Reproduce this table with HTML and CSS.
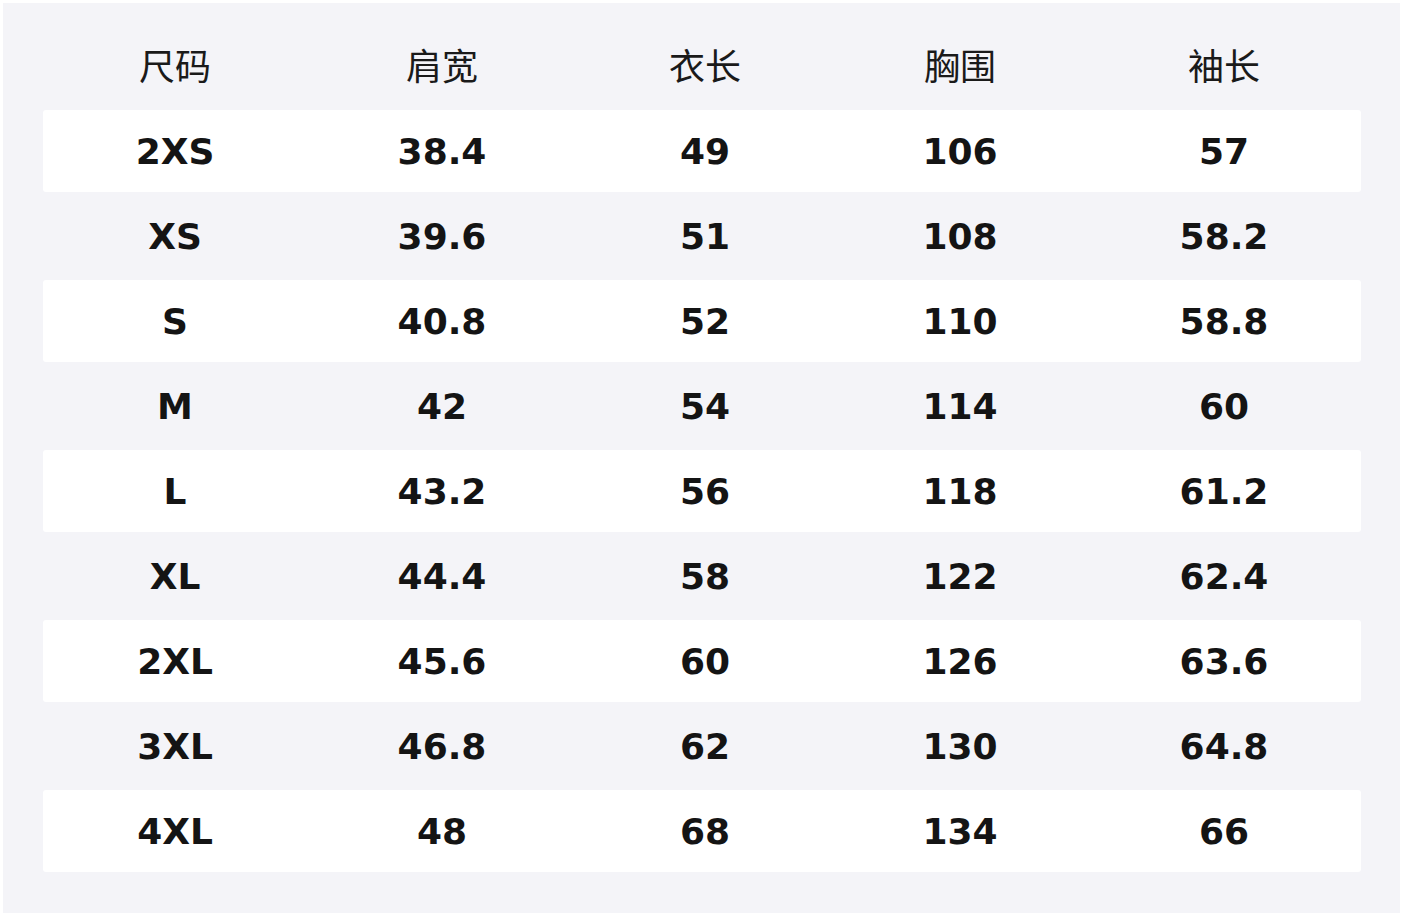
FILE: index.html
```html
<!DOCTYPE html>
<html lang="zh">
<head>
<meta charset="utf-8">
<title>尺码表</title>
<link rel="stylesheet" href="styles.css">
</head>
<body>
<div class="panel">
  <div class="table">
    <div class="row head"><div>尺码</div><div>肩宽</div><div>衣长</div><div>胸围</div><div>袖长</div></div>
    <div class="row odd"><div>2XS</div><div>38.4</div><div>49</div><div>106</div><div>57</div></div>
    <div class="row"><div>XS</div><div>39.6</div><div>51</div><div>108</div><div>58.2</div></div>
    <div class="row odd"><div>S</div><div>40.8</div><div>52</div><div>110</div><div>58.8</div></div>
    <div class="row"><div>M</div><div>42</div><div>54</div><div>114</div><div>60</div></div>
    <div class="row odd"><div>L</div><div>43.2</div><div>56</div><div>118</div><div>61.2</div></div>
    <div class="row"><div>XL</div><div>44.4</div><div>58</div><div>122</div><div>62.4</div></div>
    <div class="row odd"><div>2XL</div><div>45.6</div><div>60</div><div>126</div><div>63.6</div></div>
    <div class="row"><div>3XL</div><div>46.8</div><div>62</div><div>130</div><div>64.8</div></div>
    <div class="row odd"><div>4XL</div><div>48</div><div>68</div><div>134</div><div>66</div></div>
  </div>
</div>
</body>
</html>
```
FILE: styles.css
```css
html, body {
  margin: 0;
  padding: 0;
  background: #ffffff;
}
.panel {
  margin: 3px 0 0 3px;
  width: 1397px;
  height: 910px;
  box-sizing: border-box;
  padding: 22px 39px 0 40px;
  background: #f4f4f8;
}
.table {
  display: flex;
  flex-direction: column;
  gap: 3px;
}
.row {
  display: grid;
  grid-template-columns: 264px 270px 256px 254px 274px;
  height: 82px;
  box-sizing: border-box;
  padding-top: 2px;
  align-items: center;
  border-radius: 3px;
  font-family: "DejaVu Sans", sans-serif;
  font-weight: bold;
  font-size: 36px;
  color: #141414;
}
.row > div {
  text-align: center;
  line-height: 1;
}
.row.odd {
  background: #ffffff;
}
.row.head {
  padding-top: 0;
  padding-bottom: 4px;
  font-family: "Noto Sans CJK SC", sans-serif;
  font-weight: 400;
  font-size: 36px;
  color: #1a1a1a;
}
```
